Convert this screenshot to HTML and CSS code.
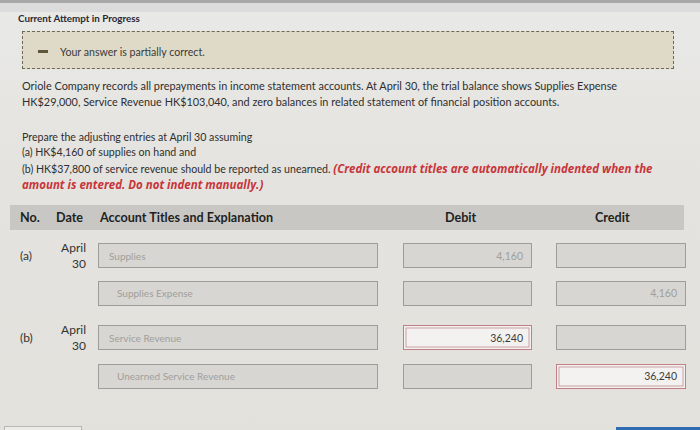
FILE: index.html
```html
<!DOCTYPE html>
<html>
<head>
<meta charset="utf-8">
<link rel="stylesheet" href="styles.css">
</head>
<body>
<div class="page">
  <div class="topbar"></div>
  <div class="title">Current Attempt in Progress</div>
  <div class="notice">
    <span class="dash"></span>
    <span class="notice-text">Your answer is partially correct.</span>
  </div>
  <div class="content">
    <p class="para1">Oriole Company records all prepayments in income statement accounts. At April 30, the trial balance shows Supplies Expense<br>HK$29,000, Service Revenue HK$103,040, and zero balances in related statement of financial position accounts.</p>
    <p class="para2">Prepare the adjusting entries at April 30 assuming<br>(a) HK$4,160 of supplies on hand and<br>(b) HK$37,800 of service revenue should be reported as unearned. <span class="warn">(Credit account titles are automatically indented when the<br>amount is entered. Do not indent manually.)</span></p>
  </div>
  <div class="journal">
    <div class="head">
      <div class="h-no">No.</div>
      <div class="h-date">Date</div>
      <div class="h-acct">Account Titles and Explanation</div>
      <div class="h-debit">Debit</div>
      <div class="h-credit">Credit</div>
    </div>
    <div class="row first">
      <div class="no">(a)</div>
      <div class="date">April<br>30</div>
      <div class="cell acct"><div class="field">Supplies</div></div>
      <div class="cell"><div class="field num">4,160</div></div>
      <div class="cell"><div class="field num"></div></div>
    </div>
    <div class="row">
      <div class="no"></div>
      <div class="date"></div>
      <div class="cell acct"><div class="field indent">Supplies Expense</div></div>
      <div class="cell"><div class="field num"></div></div>
      <div class="cell"><div class="field num">4,160</div></div>
    </div>
    <div class="row">
      <div class="no">(b)</div>
      <div class="date">April<br>30</div>
      <div class="cell acct"><div class="field">Service Revenue</div></div>
      <div class="cell"><div class="field num wrong">36,240</div></div>
      <div class="cell"><div class="field num"></div></div>
    </div>
    <div class="row last">
      <div class="no"></div>
      <div class="date"></div>
      <div class="cell acct"><div class="field indent">Unearned Service Revenue</div></div>
      <div class="cell"><div class="field num"></div></div>
      <div class="cell"><div class="field num wrong">36,240</div></div>
    </div>
  </div>
  <div class="bottom">
    <div class="btn-left"></div>
    <div class="btn-right"></div>
  </div>
</div>
</body>
</html>
```
FILE: styles.css
```css
html, body {
  margin: 0;
  padding: 0;
}
body {
  width: 700px;
  height: 430px;
  overflow: hidden;
  background: #e4e3df;
  font-family: Lato, "Open Sans", sans-serif;
  color: #2e2e2e;
}
.page {
  position: relative;
  width: 700px;
  height: 430px;
  background: linear-gradient(180deg, #e9e9e7 0%, #e4e3df 40%, #e2e1dc 100%);
}
.topbar {
  height: 3px;
  background: #a8a8a8;
  border-bottom: 9px solid #dcdcdc;
}
.title {
  margin-left: 18px;
  font-size: 9.8px;
  font-weight: 700;
  color: #262a35;
  line-height: 12px;
}
.notice {
  margin: 7px 26px 0 22px;
  border: 1.5px dashed #6d6855;
  background: #dfdac7;
  display: flex;
  align-items: center;
  padding-top: 3px;
  box-sizing: border-box;
  height: 38px;
}
.dash {
  display: inline-block;
  width: 10px;
  height: 2.5px;
  background: #5c573c;
  margin-left: 15px;
  margin-right: 12px;
}
.notice-text {
  font-size: 10.6px;
  color: #3a3a3a;
}
.content {
  padding-left: 22px;
  color: #2f2f2f;
}
.para1 {
  margin: 9px 0 0 0;
  line-height: 16px;
  font-size: 10.9px;
}
.para2 {
  margin: 20px 0 0 0;
  line-height: 15.4px;
  font-size: 10.6px;
}
.warn {
  color: #c8353a;
  font-family: "Open Sans", Lato, sans-serif;
  font-style: italic;
  font-weight: 700;
  font-size: 11.5px;
}
.journal {
  margin: 11px 0 0 10px;
  width: 674px;
}
.head {
  display: grid;
  grid-template-columns: 40px 48px 280px 154px 152px;
  background: #c8c7c3;
  height: 25px;
  align-items: center;
  font-size: 12.6px;
  font-weight: 700;
  color: #1f1f1f;
}
.h-no { padding-left: 10px; }
.h-date { padding-left: 6px; }
.h-acct { padding-left: 2px; }
.h-debit { padding-left: 67px; }
.h-credit { padding-left: 63px; }
.row {
  display: grid;
  grid-template-columns: 40px 42px 286px 154px 154px;
  height: 25px;
  margin-top: 16px;
  align-items: center;
  font-size: 12px;
}
.row.first { margin-top: 10px; }
.row.last { margin-top: 17px; }
.no {
  padding-left: 10px;
  color: #333;
}
.date {
  text-align: right;
  padding-right: 6px;
  line-height: 16px;
  font-size: 12px;
  color: #333;
}
.cell {
  height: 25px;
  display: flex;
  justify-content: flex-end;
}
.field {
  box-sizing: border-box;
  height: 25px;
  width: 129px;
  border: 1.5px solid #9e9d99;
  background: #d7d6d2;
  font-size: 10px;
  color: #a09f9b;
  display: flex;
  align-items: center;
  padding: 0 8px;
}
.acct .field {
  width: 280px;
  padding-left: 10px;
}
.acct .field.indent {
  padding-left: 18px;
}
.num {
  justify-content: flex-end;
  font-size: 10.5px;
}
.cell:last-child .field {
  width: 130px;
}
.field.wrong {
  background: #f4f2f0;
  border: 1px solid #c07f84;
  box-shadow: inset 0 0 0 1.5px #f4f2f0, inset 0 0 0 2.5px #c9a0a3;
  color: #3c3c3c;
  font-size: 10.5px;
}
.bottom {
  position: absolute;
  left: 0;
  bottom: 0;
  width: 700px;
  height: 4px;
}
.btn-left {
  position: absolute;
  left: 4px;
  bottom: 0;
  width: 76px;
  height: 3px;
  border: 1px solid #b9b8b4;
  border-bottom: none;
  background: #ecebe8;
}
.btn-right {
  position: absolute;
  right: 0;
  bottom: 0;
  width: 84px;
  height: 3px;
  background: #2f6bb0;
}
```
